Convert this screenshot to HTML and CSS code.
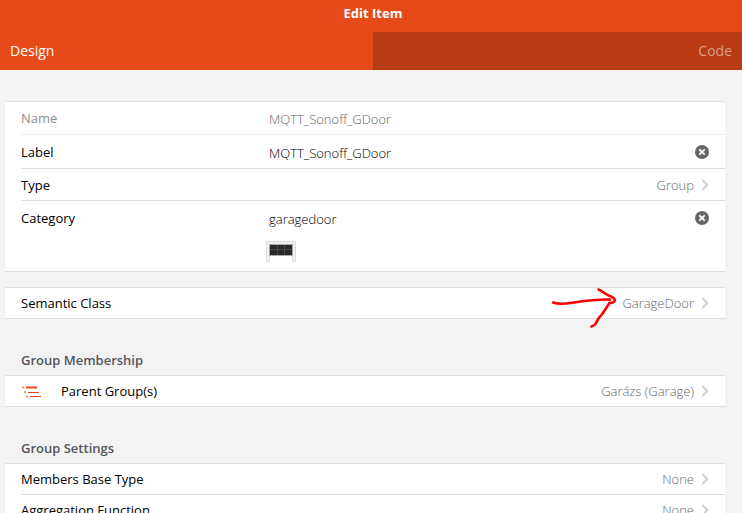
FILE: index.html
```html
<!DOCTYPE html>
<html lang="en">
<head>
<meta charset="utf-8">
<meta name="viewport" content="width=device-width, initial-scale=1">
<title>Edit Item</title>
<link rel="stylesheet" href="styles.css">
</head>
<body>
<svg class="defs" aria-hidden="true">
  <symbol id="chevron" viewBox="0 0 8 12"><path d="M1.5 1.2 6.3 6 1.5 10.8" fill="none" stroke="#c7c7cc" stroke-width="1.7"/></symbol>
  <symbol id="clear" viewBox="0 0 14 14"><circle cx="7" cy="7" r="7" fill="#666"/><path d="M4.300 4.300l5.400 5.400M9.700 4.300l-5.400 5.400" stroke="#fff" stroke-width="1.8"/></symbol>
</svg>
<header class="navbar"><h1>Edit Item</h1></header>
<nav class="tabs">
  <a class="tab active" href="#design">Design</a>
  <a class="tab code" href="#code">Code</a>
</nav>
<main class="page" id="design">
  <section class="list">
    <div class="row field disabled">
      <label for="name">Name</label>
      <input id="name" value="MQTT_Sonoff_GDoor" disabled>
    </div>
    <div class="row field tall">
      <label for="label">Label</label>
      <input id="label" value="MQTT_Sonoff_GDoor">
      <button class="clear" aria-label="Clear label"><svg><use href="#clear"/></svg></button>
    </div>
    <a class="row type" href="#type"><span>Type</span><span class="value">Group</span><svg class="chevron"><use href="#chevron"/></svg></a>
    <div class="row field category last">
      <label for="category">Category</label>
      <input id="category" value="garagedoor">
      <button class="clear" aria-label="Clear category"><svg><use href="#clear"/></svg></button>
      <svg class="door" viewBox="0 0 30 21" aria-hidden="true">
        <path d="M.5 20.5V.5h29v20h-3V3.500h-23v17z" fill="#f0f0f0" stroke="#dedede"/>
        <path d="M3 3h24v12H3z" fill="#aaa"/>
        <path d="M4 4h22v10H4z" fill="#292929"/>
        <path d="M4 8.500h22M11.500 4v10M18.500 4v10" stroke="#484848" fill="none"/>
      </svg>
    </div>
  </section>

  <section class="list semantic">
    <a class="row last" href="#semantic"><span>Semantic Class</span><span class="value">GarageDoor</span><svg class="chevron"><use href="#chevron"/></svg></a>
    <svg class="arrow" viewBox="0 0 68 44" aria-hidden="true"><path d="M3 16.500C7 18 14 18 22 16.800 33 15.200 44 13.200 60 13.600M48.500 3.500C54 6 56 9 61 10.500 65 12 66 15 63 16.500L59.500 17C56 22 54 26 51 29.500 48 32 48 34 46 37 45 39 43 40 41.500 40.500" fill="none" stroke="#f00" stroke-width="2.600" stroke-linecap="round" stroke-linejoin="round"/></svg>
  </section>

  <h2>Group Membership</h2>
  <section class="list">
    <a class="row last" href="#parents">
      <svg class="group" viewBox="0 0 20 12" aria-hidden="true"><path d="M4 1.500h11" stroke="#e64a19" stroke-width="2"/><path d="M6 6.500h11M8 10.500h11" stroke="#e64a19"/><path d="M0 1.500h2M2 6h2M4 10.500h2" stroke="#ee7b58" stroke-width="1.500"/></svg>
      <span>Parent Group(s)</span><span class="value">Garázs (Garage)</span><svg class="chevron"><use href="#chevron"/></svg></a>
  </section>

  <h2>Group Settings</h2>
  <section class="list">
    <a class="row" href="#base"><span>Members Base Type</span><span class="value">None</span><svg class="chevron"><use href="#chevron"/></svg></a>
    <a class="row last" href="#aggregation"><span>Aggregation Function</span><span class="value">None</span><svg class="chevron"><use href="#chevron"/></svg></a>
  </section>
</main>
</body>
</html>
```
FILE: styles.css
```css
* { box-sizing: border-box; }
html { overflow: hidden; }
body {
  margin: 0;
  background: #f3f3f3;
  color: #000;
  font: 13px/20px "Open Sans", "Noto Sans", sans-serif;
}
a { color: inherit; text-decoration: none; }
svg { display: block; }
.defs { display: none; }

.navbar { background: #e64a19; color: #fff; text-align: center; padding: 3px 0; }
.navbar h1 { margin: 0; font-size: 13px; line-height: 20px; font-weight: 700; padding: 0 0 6px 4px; }
.tabs { display: grid; grid-template-columns: calc(50% + 2px) 1fr; background: #e64a19; }
.tab { padding: 9px 10px; color: #fff; font-size: 14px; }
.tab.code { background: #b83b14; color: #db9d89; text-align: right; }

.page { padding: 31px 17px 0 5px; }
.list {
  background: #fff;
  border-top: 1px solid #dedede;
  border-bottom: 1px solid #dedede;
  padding-left: 16px;
}
.row { display: flex; align-items: center; min-height: 31px; padding: 0 16px 0 0; border-bottom: 1px solid #dedede; }
.row.last { border-bottom: 0; min-height: 30px; }
.row.type { min-height: 32px; }
.value { margin-left: auto; padding-right: 7px; color: #68686c; font-weight: 300; }
.chevron { width: 8px; height: 12px; }

.field { display: grid; grid-template-columns: 248px 1fr auto; }
.field input {
  width: 100%;
  height: 20px;
  margin-top: 3px;
  padding: 0;
  border: 0;
  outline: 0;
  background: none;
  color: inherit;
  font: inherit;
  font-weight: 300;
}
.row.disabled { color: #8c8c8c; border-color: #efefef; min-height: 33px; padding-bottom: 1px; }
.disabled input { color: #666; }
.row.tall { min-height: 34px; }
.clear { width: 14px; height: 14px; padding: 0; border: 0; background: none; }
.clear svg { width: 14px; height: 14px; }
.row.category { align-content: start; padding-top: 5px; min-height: 70px; }
.door { grid-column: 2; width: 30px; height: 21px; margin: 12px 0 0 -3px; }

.semantic { position: relative; margin-top: 15px; }
.arrow { position: absolute; right: 107px; top: -2px; width: 68px; height: 44px; }
h2 { margin: 31px 0 5px 16px; color: #55555a; font-size: 13px; line-height: 20px; font-weight: 600; }
.group { width: 20px; height: 12px; margin: 2px 19px 0 1px; }
```
